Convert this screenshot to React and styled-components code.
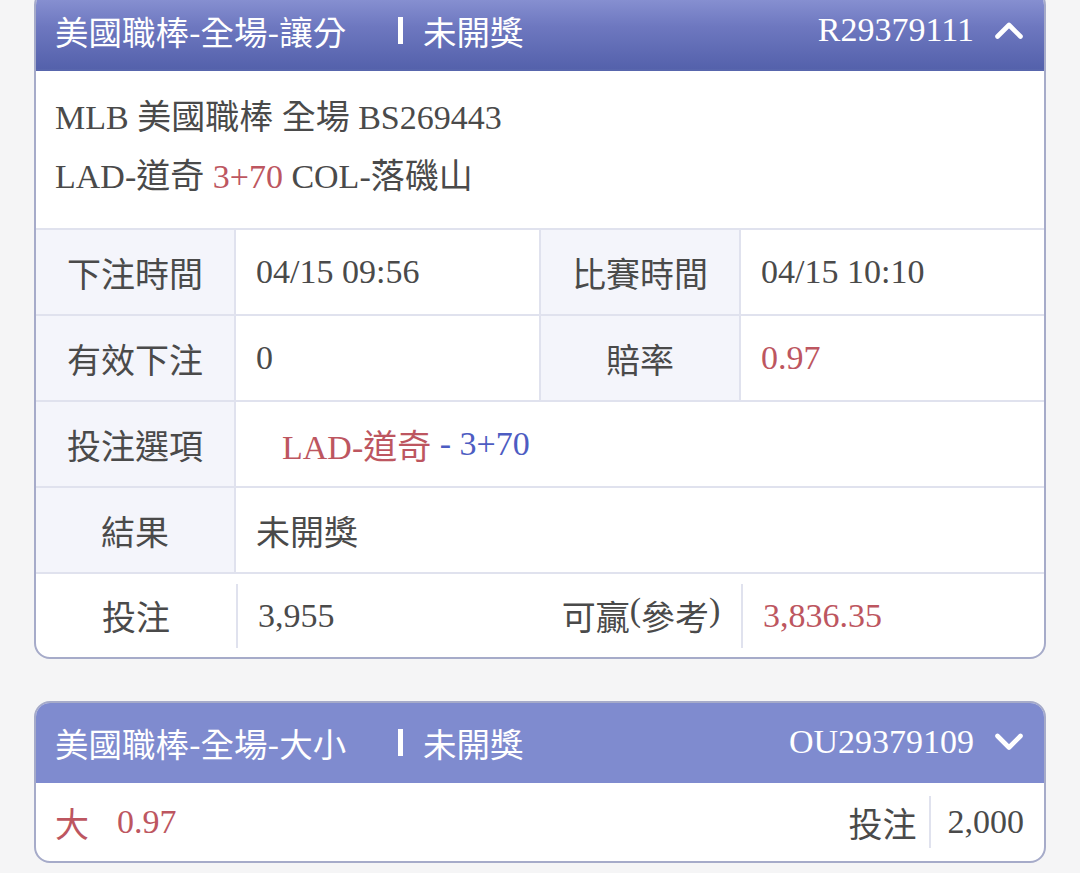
import styled, { createGlobalStyle } from "styled-components";

const GlobalStyle = createGlobalStyle`
  html, body {
    margin: 0;
    padding: 0;
    background: #f5f5f6;
  }
  body {
    font-family: "Liberation Serif", "Noto Sans CJK TC", serif;
    color: #4a4a4a;
  }
`;

const Page = styled.div`
  padding: 0 34px;
  margin-top: -11px;
  display: flex;
  flex-direction: column;
  gap: 42px;
`;

const Card = styled.div`
  background: #fff;
  border: 2px solid #a6abc9;
  border-radius: 16px;
  overflow: hidden;
`;

const Header = styled.div`
  height: 78px;
  display: flex;
  align-items: center;
  padding: 0 20px 0 19px;
  color: #fff;
  background: ${(p) =>
    p.$open ? "linear-gradient(180deg, #8e97d6 0%, #6e78c0 45%, #5461ab 100%)" : "#7f8bcf"};
  border-bottom: 2px solid ${(p) => (p.$open ? "#5866ad" : "#7f8bcf")};
`;

const Title = styled.span`
  font-family: "Noto Sans CJK TC", sans-serif;
  font-size: 33.5px;
  width: 343px;
  white-space: nowrap;
`;

const Bar = styled.span`
  display: inline-block;
  width: 5px;
  height: 27px;
  background: #fff;
  margin-right: 20px;
`;

const Status = styled.span`
  font-family: "Noto Sans CJK TC", sans-serif;
  font-size: 33.5px;
  flex: 1;
`;

const BetId = styled.span`
  font-family: "Liberation Serif", serif;
  font-size: 34px;
  margin-right: 20px;
`;

const Chevron = ({ up }) => (
  <svg width="30" height="20" viewBox="0 0 30 20" fill="none">
    <path
      d={up ? "M3.5 16.5 L15 5 L26.5 16.5" : "M3.5 4 L15 15.5 L26.5 4"}
      stroke="#fff"
      strokeWidth="4.6"
      strokeLinecap="round"
      strokeLinejoin="round"
    />
  </svg>
);

const Info = styled.div`
  padding: 17px 19px 22px;
  font-size: 34px;
  line-height: 59px;
  border-bottom: 2px solid #e0e2ee;
`;

const Red = styled.span`
  color: #bd5660;
`;

const Blue = styled.span`
  color: #4d5cc2;
`;

const Grid = styled.div`
  display: grid;
  grid-template-columns: 200px 305px 200px 1fr;
`;

const Label = styled.div`
  height: 84px;
  display: flex;
  align-items: center;
  justify-content: center;
  font-family: "Noto Sans CJK TC", sans-serif;
  font-size: 34px;
  color: #4a4a4a;
  background: #f4f5fb;
  border-right: 2px solid #e0e2ee;
  border-bottom: 2px solid #e0e2ee;
`;

const Value = styled.div`
  height: 84px;
  display: flex;
  align-items: center;
  padding-left: ${(p) => p.$indent || 20}px;
  font-size: 34px;
  color: ${(p) => (p.$red ? "#bd5660" : "#4a4a4a")};
  grid-column: span ${(p) => p.$span || 1};
  border-right: ${(p) => (p.$sep ? "2px solid #e0e2ee" : "none")};
  border-bottom: 2px solid #e0e2ee;
  font-family: "Liberation Serif", "Noto Sans CJK TC", serif;
`;

const LastRow = styled.div`
  grid-column: 1 / -1;
  display: grid;
  grid-template-columns: 200px 305px 200px 1fr;
  align-items: center;
  height: 83px;
`;

const LastLabel = styled.div`
  display: flex;
  justify-content: center;
  font-family: "Noto Sans CJK TC", sans-serif;
  font-size: 34px;
  color: #4a4a4a;
`;

const LastValue = styled.div`
  height: 64px;
  display: flex;
  align-items: center;
  padding-left: 20px;
  border-left: 2px solid #e0e2ee;
  font-size: 34px;
  color: ${(p) => (p.$red ? "#bd5660" : "#4a4a4a")};
`;

const Paren = styled.span`
  font-family: "Liberation Serif", serif;
`;

const Summary = styled.div`
  height: 78px;
  display: flex;
  align-items: center;
  padding: 0 20px 0 19px;
  font-size: 34px;
`;

const Pick = styled.span`
  flex: 1;
  color: #bd5660;
  display: flex;
  gap: 28px;
  align-items: center;
`;

const Cjk = styled.span`
  font-family: "Noto Sans CJK TC", sans-serif;
`;

const StakeLabel = styled.span`
  font-family: "Noto Sans CJK TC", sans-serif;
  padding-right: 12px;
  border-right: 2px solid #e0e2ee;
  height: 52px;
  display: flex;
  align-items: center;
`;

const StakeValue = styled.span`
  padding-left: 17px;
`;

export default function App() {
  return (
    <>
      <GlobalStyle />
      <Page>
        <Card>
          <Header $open>
            <Title>美國職棒-全場-讓分</Title>
            <Bar />
            <Status>未開獎</Status>
            <BetId>R29379111</BetId>
            <Chevron up />
          </Header>
          <Info>
            <div>MLB 美國職棒 全場 BS269443</div>
            <div>
              LAD-道奇 <Red>3+70</Red> COL-落磯山
            </div>
          </Info>
          <Grid>
            <Label>下注時間</Label>
            <Value $sep>04/15 09:56</Value>
            <Label>比賽時間</Label>
            <Value>04/15 10:10</Value>

            <Label>有效下注</Label>
            <Value $sep>0</Value>
            <Label>賠率</Label>
            <Value $red>0.97</Value>

            <Label>投注選項</Label>
            <Value $span={3} $indent={46}>
              <Red>LAD-道奇</Red>&nbsp;<Blue>- 3+70</Blue>
            </Value>

            <Label>結果</Label>
            <Value $span={3}>
              <Cjk>未開獎</Cjk>
            </Value>

            <LastRow>
              <LastLabel>投注</LastLabel>
              <LastValue>3,955</LastValue>
              <LastLabel>
                可贏<Paren>(</Paren>參考<Paren>)</Paren>
              </LastLabel>
              <LastValue $red>3,836.35</LastValue>
            </LastRow>
          </Grid>
        </Card>

        <Card>
          <Header>
            <Title>美國職棒-全場-大小</Title>
            <Bar />
            <Status>未開獎</Status>
            <BetId>OU29379109</BetId>
            <Chevron />
          </Header>
          <Summary>
            <Pick>
              <Cjk>大</Cjk>
              <span>0.97</span>
            </Pick>
            <StakeLabel>投注</StakeLabel>
            <StakeValue>2,000</StakeValue>
          </Summary>
        </Card>
      </Page>
    </>
  );
}
